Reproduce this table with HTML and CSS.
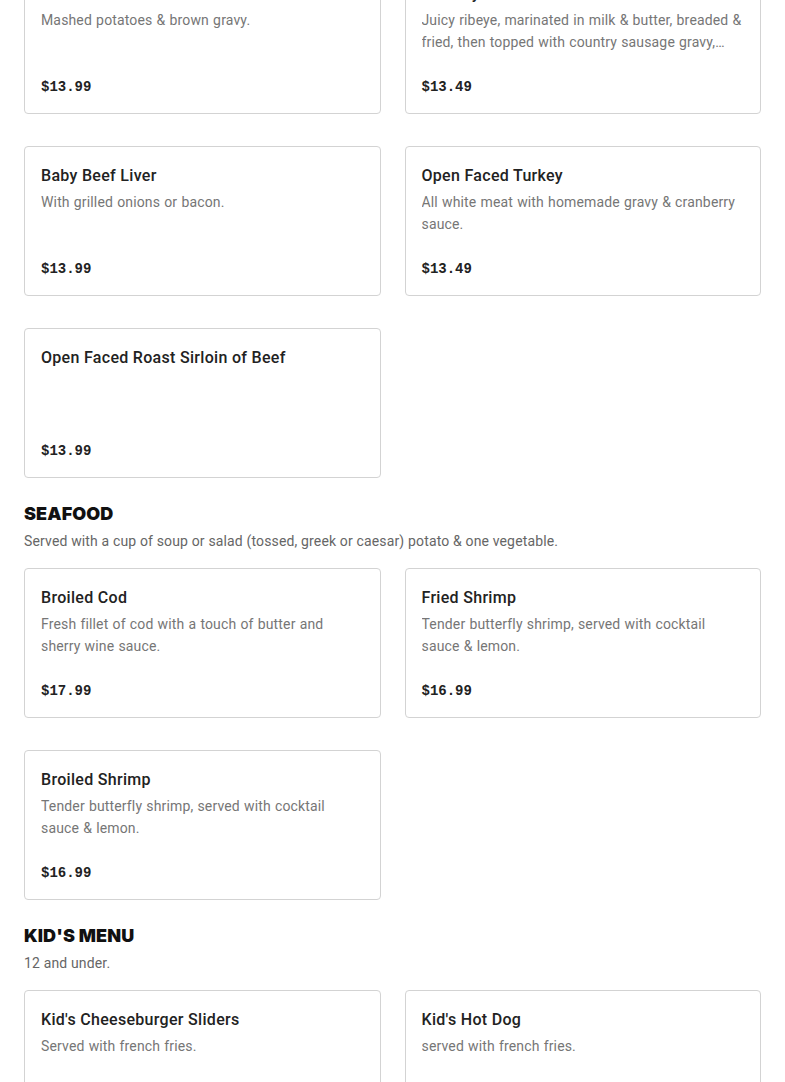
FILE: index.html
```html
<!DOCTYPE html>
<html lang="en">
<head>
<meta charset="utf-8">
<title>Menu</title>
<link rel="stylesheet" href="styles.css">
</head>
<body>
<main class="menu">
  <section class="section section-continued">
    <div class="grid">
      <article class="card">
        <h3 class="card-title">Meatloaf</h3>
        <p class="card-desc">Mashed potatoes &amp; brown gravy.</p>
        <p class="card-price">$13.99</p>
      </article>
      <article class="card">
        <h3 class="card-title">Country Fried Steak</h3>
        <p class="card-desc">Juicy ribeye, marinated in milk &amp; butter, breaded &amp; fried, then topped with country sausage gravy, served with mashed potatoes.</p>
        <p class="card-price">$13.49</p>
      </article>
      <article class="card">
        <h3 class="card-title">Baby Beef Liver</h3>
        <p class="card-desc">With grilled onions or bacon.</p>
        <p class="card-price">$13.99</p>
      </article>
      <article class="card">
        <h3 class="card-title">Open Faced Turkey</h3>
        <p class="card-desc">All white meat with homemade gravy &amp; cranberry sauce.</p>
        <p class="card-price">$13.49</p>
      </article>
      <article class="card">
        <h3 class="card-title">Open Faced Roast Sirloin of Beef</h3>
        <p class="card-desc"></p>
        <p class="card-price">$13.99</p>
      </article>
    </div>
  </section>

  <section class="section">
    <h2 class="section-title">SEAFOOD</h2>
    <p class="section-sub">Served with a cup of soup or salad (tossed, greek or caesar) potato &amp; one vegetable.</p>
    <div class="grid">
      <article class="card">
        <h3 class="card-title">Broiled Cod</h3>
        <p class="card-desc">Fresh fillet of cod with a touch of butter and sherry wine sauce.</p>
        <p class="card-price">$17.99</p>
      </article>
      <article class="card">
        <h3 class="card-title">Fried Shrimp</h3>
        <p class="card-desc">Tender butterfly shrimp, served with cocktail sauce &amp; lemon.</p>
        <p class="card-price">$16.99</p>
      </article>
      <article class="card">
        <h3 class="card-title">Broiled Shrimp</h3>
        <p class="card-desc">Tender butterfly shrimp, served with cocktail sauce &amp; lemon.</p>
        <p class="card-price">$16.99</p>
      </article>
    </div>
  </section>

  <section class="section">
    <h2 class="section-title">KID'S MENU</h2>
    <p class="section-sub">12 and under.</p>
    <div class="grid">
      <article class="card">
        <h3 class="card-title">Kid's Cheeseburger Sliders</h3>
        <p class="card-desc">Served with french fries.</p>
        <p class="card-price">$7.99</p>
      </article>
      <article class="card">
        <h3 class="card-title">Kid's Hot Dog</h3>
        <p class="card-desc">served with french fries.</p>
        <p class="card-price">$6.99</p>
      </article>
    </div>
  </section>
</main>
</body>
</html>
```

FILE: styles.css
```css
* { box-sizing: border-box; }

html, body {
  margin: 0;
  padding: 0;
  background: #ffffff;
}

body {
  font-family: "Roboto", "Liberation Sans", sans-serif;
  color: #222222;
}

.menu {
  padding: 0 24px;
  margin-top: -36px;
}

.section {
  margin-top: 24px;
}

.section-continued {
  margin-top: 0;
}

.section-title {
  margin: 0;
  font-family: "Inter", "Liberation Sans", sans-serif;
  font-size: 18px;
  line-height: 24px;
  font-weight: 900;
  color: #111111;
  letter-spacing: 0.1px;
}

.section-sub {
  margin: 4px 0 16px;
  font-size: 14px;
  line-height: 22px;
  color: #666666;
  letter-spacing: 0.15px;
}

.grid {
  display: grid;
  grid-template-columns: 1fr 1fr;
  column-gap: 24px;
  row-gap: 32px;
}

.card {
  height: 150px;
  border: 1px solid #d3d3d3;
  border-radius: 4px;
  padding: 16px;
  display: flex;
  flex-direction: column;
  background: #ffffff;
}

.card-title {
  margin: 0;
  padding-top: 1px;
  font-size: 16px;
  line-height: 23px;
  font-weight: 500;
  color: #222222;
  letter-spacing: 0.3px;
}

.card-desc {
  margin: 4px 0 0;
  font-size: 14px;
  line-height: 22px;
  color: #767676;
  letter-spacing: 0.15px;
  word-spacing: 0.5px;
  display: -webkit-box;
  -webkit-line-clamp: 2;
  -webkit-box-orient: vertical;
  overflow: hidden;
}

.card-price {
  margin: auto 0 0;
  font-family: "Liberation Mono", "DejaVu Sans Mono", monospace;
  font-weight: 700;
  font-size: 14px;
  line-height: 20px;
  color: #222222;
}
```
